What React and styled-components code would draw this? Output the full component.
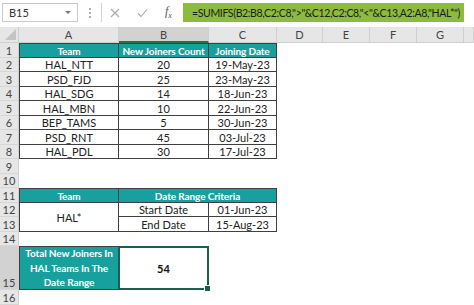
import styled, { createGlobalStyle } from "styled-components";

const TEAL = "#17a09d";
const LINE = "#404040";
const FONT = `Lato, "Open Sans", sans-serif`;

const rows = [
  ["HAL_NTT", "20", "19-May-23"],
  ["PSD_FJD", "25", "23-May-23"],
  ["HAL_SDG", "14", "18-Jun-23"],
  ["HAL_MBN", "10", "22-Jun-23"],
  ["BEP_TAMS", "5", "30-Jun-23"],
  ["PSD_RNT", "45", "03-Jul-23"],
  ["HAL_PDL", "30", "17-Jul-23"],
];

const letters = ["A", "B", "C", "D", "E", "F", "G", ""];

export default function App() {
  return (
    <Page>
      <Global />
      <FormulaBar>
        <NameBox>
          <span>B15</span>
          <Caret />
        </NameBox>
        <Dots>
          <i />
          <i />
          <i />
        </Dots>
        <Buttons>
          <svg width="10" height="10" viewBox="0 0 10 10">
            <path d="M1 1 L9 9 M9 1 L1 9" stroke="#a8a8a8" strokeWidth="1.1" />
          </svg>
          <svg width="11" height="10" viewBox="0 0 11 10">
            <path d="M1 5.5 L4 8.5 L10 1.5" stroke="#a8a8a8" strokeWidth="1.1" fill="none" />
          </svg>
          <Fx>
            f<sub>x</sub>
          </Fx>
        </Buttons>
        <Formula>=SUMIFS(B2:B8,C2:C8,"&gt;"&amp;C12,C2:C8,"&lt;"&amp;C13,A2:A8,"HAL*")</Formula>
      </FormulaBar>

      <Sheet>
        <Corner>
          <svg width="11" height="11" viewBox="0 0 11 11">
            <path d="M11 0 L11 11 L0 11 Z" fill="#c4c4c4" />
          </svg>
        </Corner>
        {letters.map((l, i) => (
          <ColHead key={i} $col={i + 2} $active={l === "B"}>
            {l}
          </ColHead>
        ))}
        {Array.from({ length: 16 }, (_, i) => (
          <RowHead key={i} $row={i + 2} $active={i === 14}>
            {i + 1}
          </RowHead>
        ))}

        {/* first table */}
        <Cell $col={2} $row={2} $head $l $t>Team</Cell>
        <Cell $col={3} $row={2} $head $t>New Joiners Count</Cell>
        <Cell $col={4} $row={2} $head $t>Joining Date</Cell>
        {rows.map((r, i) =>
          r.map((v, j) => (
            <Cell key={`${i}-${j}`} $col={j + 2} $row={i + 3} $l={j === 0}>
              {v}
            </Cell>
          ))
        )}

        {/* criteria table */}
        <Cell $col={2} $row={12} $head $l $t>Team</Cell>
        <Cell $col={3} $row={12} $span={2} $head $t>Date Range Criteria</Cell>
        <Cell $col={2} $row={13} $rspan={2} $l>HAL*</Cell>
        <Cell $col={3} $row={13}>Start Date</Cell>
        <Cell $col={4} $row={13}>01-Jun-23</Cell>
        <Cell $col={3} $row={14}>End Date</Cell>
        <Cell $col={4} $row={14}>15-Aug-23</Cell>

        {/* result */}
        <Cell $col={2} $row={16} $head $l $t $wrap>
          Total New Joiners In HAL Teams In The Date Range
        </Cell>
        <Selected>
          54
          <Handle />
        </Selected>
      </Sheet>
    </Page>
  );
}

const Global = createGlobalStyle`
  body { margin: 0; background: #fff; font-family: ${FONT}; }
`;

const Page = styled.div`
  width: 474px;
  height: 305px;
  overflow: hidden;
  display: flex;
  flex-direction: column;
`;

const FormulaBar = styled.div`
  height: 27px;
  display: flex;
  align-items: center;
  padding: 0 10px 2px 2px;
  box-sizing: border-box;
  background: #fff;
`;

const NameBox = styled.div`
  width: 76px;
  height: 19px;
  box-sizing: border-box;
  border: 1px solid #c9c9c9;
  display: flex;
  align-items: center;
  justify-content: space-between;
  padding: 0 6px 0 6px;
  font-size: 11px;
  color: #333;
`;

const Caret = styled.span`
  width: 0;
  height: 0;
  border-left: 3px solid transparent;
  border-right: 3px solid transparent;
  border-top: 3px solid #777;
`;

const Dots = styled.div`
  width: 23px;
  display: flex;
  flex-direction: column;
  align-items: center;
  gap: 2px;
  & > i {
    width: 2px;
    height: 2px;
    background: #b0b0b0;
  }
`;

const Buttons = styled.div`
  height: 19px;
  width: 82px;
  flex-shrink: 0;
  border-left: 1px solid #d4d4d4;
  display: flex;
  align-items: center;
  gap: 17px;
  padding-left: 8px;
  box-sizing: border-box;
`;

const Fx = styled.span`
  font-family: "Liberation Serif", serif;
  font-style: italic;
  font-size: 12px;
  color: #555;
  & sub {
    font-size: 8px;
  }
`;

const Formula = styled.div`
  flex: 1;
  min-width: 0;
  height: 19px;
  background: #8dbb3e;
  display: flex;
  align-items: center;
  padding-left: 9px;
  font-size: 10.5px;
  letter-spacing: -0.35px;
  color: #1c1c1c;
  white-space: nowrap;
  overflow: hidden;
`;

const Sheet = styled.div`
  flex: 1;
  display: grid;
  grid-template-columns: 19px 100px 90px 68px 46px 47px 47px 47px 1fr;
  grid-template-rows: 16px 15px 14px 15px 14px 15px 14px 15px 14px 15px 14px 15px 14px 15px 14px 44px 1fr;
  font-size: 11px;
`;

const Corner = styled.div`
  grid-column: 1;
  grid-row: 1;
  background: #e6e6e6;
  border-right: 1px solid #cfcfcf;
  border-bottom: 1px solid #cfcfcf;
  display: flex;
  align-items: flex-end;
  justify-content: flex-end;
  padding: 0 2px 2px 0;
`;

const ColHead = styled.div`
  grid-column: ${(p) => p.$col};
  grid-row: 1;
  background: ${(p) => (p.$active ? "#d2d2d2" : "#e6e6e6")};
  border-right: 1px solid #d0d0d0;
  border-bottom: ${(p) => (p.$active ? "2px solid #217346" : "1px solid #cfcfcf")};
  display: flex;
  align-items: center;
  justify-content: center;
  color: #444;
  font-size: 11px;
`;

const RowHead = styled.div`
  grid-column: 1;
  grid-row: ${(p) => p.$row};
  background: ${(p) => (p.$active ? "#d2d2d2" : "#e6e6e6")};
  border-right: 1px solid #cfcfcf;
  border-bottom: 1px solid #d6d6d6;
  display: flex;
  align-items: flex-end;
  justify-content: center;
  padding-bottom: 1px;
  color: #444;
  font-size: 11px;
  line-height: 1;
`;

const Cell = styled.div`
  grid-column: ${(p) => p.$col} / span ${(p) => p.$span || 1};
  grid-row: ${(p) => p.$row} / span ${(p) => p.$rspan || 1};
  display: flex;
  align-items: center;
  justify-content: center;
  text-align: center;
  background: ${(p) => (p.$head ? TEAL : "#fff")};
  color: ${(p) => (p.$head ? "#fff" : "#222")};
  font-weight: ${(p) => (p.$head ? 700 : 400)};
  font-size: ${(p) => (p.$head ? "10px" : "11px")};
  letter-spacing: ${(p) => (p.$head ? "-0.1px" : "0")};
  line-height: ${(p) => (p.$wrap ? "14.5px" : 1)};
  white-space: ${(p) => (p.$wrap ? "normal" : "nowrap")};
  border-right: 1px solid ${LINE};
  border-bottom: 1px solid ${LINE};
  border-left: ${(p) => (p.$l ? `1px solid ${LINE}` : "0")};
  border-top: ${(p) => (p.$t ? `1px solid ${LINE}` : "0")};
`;

const Selected = styled.div`
  grid-column: 3;
  grid-row: 16;
  position: relative;
  margin-left: -1px;
  border: 2px solid #1d5f4c;
  display: flex;
  align-items: center;
  justify-content: center;
  font-weight: 700;
  font-size: 11px;
  color: #111;
`;

const Handle = styled.span`
  position: absolute;
  right: -4px;
  bottom: -4px;
  width: 5px;
  height: 5px;
  background: #1d5f4c;
  border: 1px solid #fff;
`;
